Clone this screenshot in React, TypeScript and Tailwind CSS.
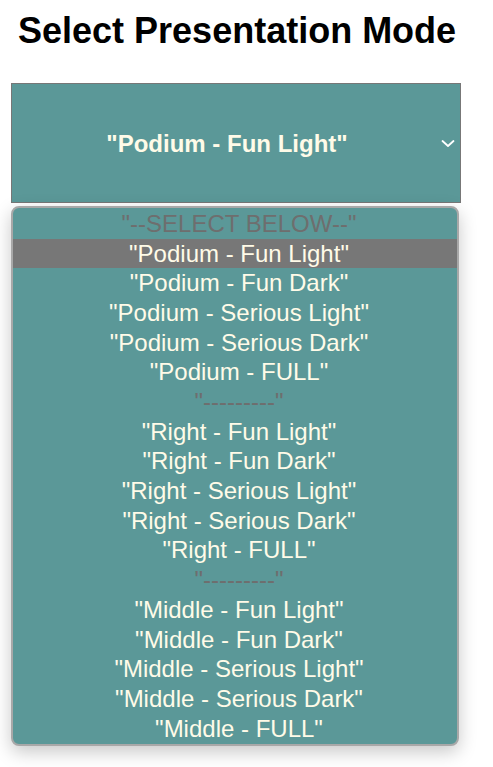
import { useState } from "react"

const SEP = '"---------"'

const options = [
  { label: '"--SELECT BELOW--"', disabled: true },
  { label: '"Podium - Fun Light"' },
  { label: '"Podium - Fun Dark"' },
  { label: '"Podium - Serious Light"' },
  { label: '"Podium - Serious Dark"' },
  { label: '"Podium - FULL"' },
  { label: SEP, disabled: true },
  { label: '"Right - Fun Light"' },
  { label: '"Right - Fun Dark"' },
  { label: '"Right - Serious Light"' },
  { label: '"Right - Serious Dark"' },
  { label: '"Right - FULL"' },
  { label: SEP, disabled: true },
  { label: '"Middle - Fun Light"' },
  { label: '"Middle - Fun Dark"' },
  { label: '"Middle - Serious Light"' },
  { label: '"Middle - Serious Dark"' },
  { label: '"Middle - FULL"' },
]

export default function App() {
  const [selected, setSelected] = useState('"Podium - Fun Light"')

  return (
    <main className="min-h-screen bg-white px-[11px] pt-[10px] font-['Liberation_Sans',Arial,sans-serif]">
      <h1 className="ml-[7px] text-[36px] font-bold leading-[41.4px] text-black">
        Select Presentation Mode
      </h1>

      <div className="mt-[32px] flex h-[120px] w-[450px] items-center border border-[#777777] bg-[#5b9898]">
        <span className="flex-1 pl-[2px] pt-[2px] text-center text-[24px] font-bold text-[#fffbe8]">
          {selected}
        </span>
        <svg
          width="16"
          height="16"
          viewBox="0 0 16 16"
          className="mr-[4px]"
          fill="none"
          stroke="#ffffff"
          strokeWidth="1.8"
          strokeLinecap="round"
          strokeLinejoin="round"
        >
          <path d="M2.5 6 L8 11 L13.5 6" />
        </svg>
      </div>

      <div className="mt-[3px] w-[448px] overflow-hidden rounded-[8px] border-2 border-[#a8a8a8] bg-[#5b9898] py-[0.5px] shadow-[0_6px_18px_rgba(0,0,0,0.22)]">
        {options.map((opt, i) => {
          const active = opt.label === selected && !opt.disabled
          return (
            <div
              key={i}
              onClick={() => !opt.disabled && setSelected(opt.label)}
              className={
                "h-[29.7px] pl-[8px] text-center text-[24px] leading-[29.7px] " +
                (active
                  ? "bg-[#777777] text-[#fffbe8]"
                  : opt.disabled
                    ? "text-[#6e6e6e]"
                    : "text-[#fffbe8]")
              }
            >
              {opt.label}
            </div>
          )
        })}
      </div>
    </main>
  )
}
